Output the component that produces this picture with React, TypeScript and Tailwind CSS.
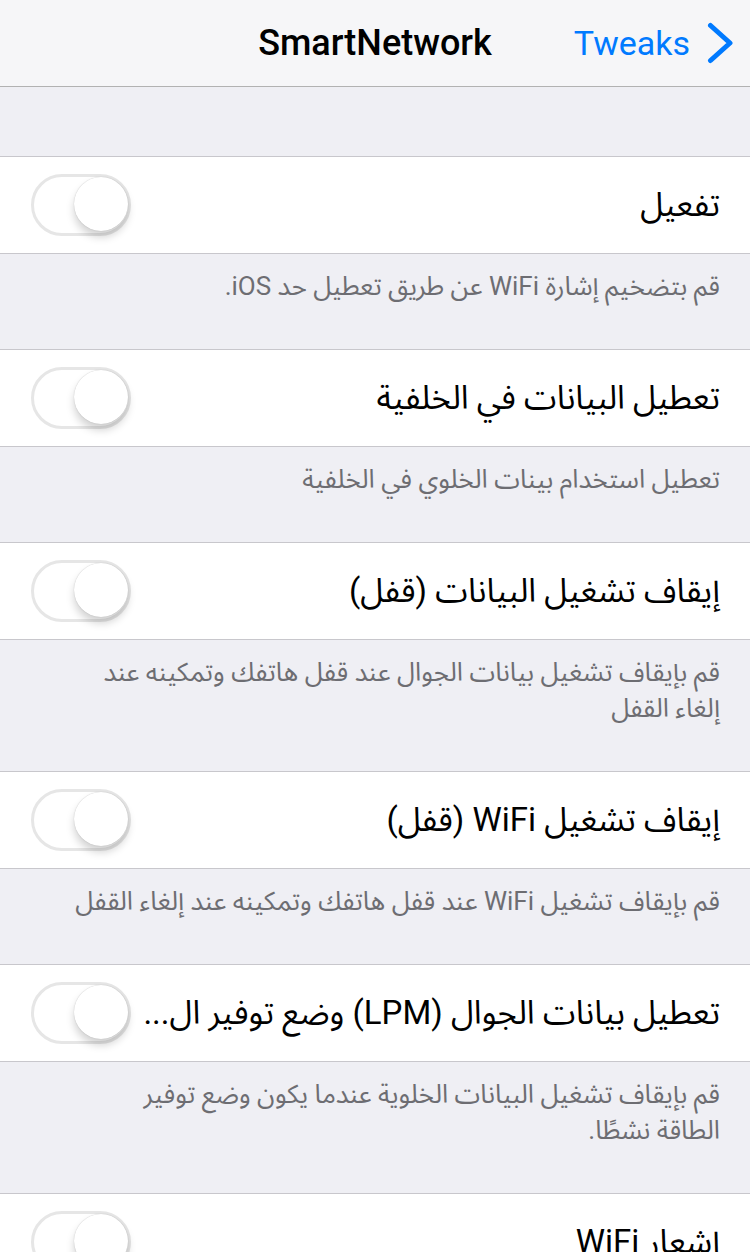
import React from "react";

const FONT = { fontFamily: "Roboto, 'Noto Sans Arabic', 'DejaVu Sans', 'Noto Sans', sans-serif" };

function Switch() {
  return (
    <div className="relative h-[62px] w-[100px] shrink-0 rounded-full border-[3px] border-[#e6e6e6] bg-white">
      <div className="absolute right-[0px] top-[0px] h-[54px] w-[54px] rounded-full bg-white shadow-[0_6px_8px_rgba(0,0,0,0.18),0_0_1px_rgba(0,0,0,0.25)]" />
    </div>
  );
}

function Cell({ label }: { label: string }) {
  return (
    <div className="flex h-[98px] items-center justify-between border-y border-[#c8c7cc] bg-white pl-[31px] pr-[30px]" dir="ltr">
      <Switch />
      <div
        dir="rtl"
        className="ml-[6px] min-w-0 flex-1 whitespace-nowrap text-right text-[33px] leading-[42px] text-black"
      >
        {label}
      </div>
    </div>
  );
}

function Footer({ lines }: { lines: string[] }) {
  return (
    <div
      dir="rtl"
      className="pl-[28px] pr-[30px] pt-[14px] pb-[45px] text-right text-[26px] leading-[36px] text-[#6d6d72]"
    >
      {lines.map((l, i) => (
        <div key={i} className="whitespace-nowrap">
          {l}
        </div>
      ))}
    </div>
  );
}

export default function App() {
  const items = [
    { label: "تفعيل", footer: ["قم بتضخيم إشارة WiFi عن طريق تعطيل حد iOS."] },
    { label: "تعطيل البيانات في الخلفية", footer: ["تعطيل استخدام بينات الخلوي في الخلفية"] },
    {
      label: "إيقاف تشغيل البيانات (قفل)",
      footer: ["قم بإيقاف تشغيل بيانات الجوال عند قفل هاتفك وتمكينه عند", "إلغاء القفل"],
    },
    { label: "إيقاف تشغيل WiFi (قفل)", footer: ["قم بإيقاف تشغيل WiFi عند قفل هاتفك وتمكينه عند إلغاء القفل"] },
    {
      label: "تعطيل بيانات الجوال (LPM) وضع توفير ال...",
      footer: ["قم بإيقاف تشغيل البيانات الخلوية عندما يكون وضع توفير", "الطاقة نشطًا."],
    },
  ];
  return (
    <div className="h-[1252px] w-[750px] overflow-hidden bg-[#efeff4]" style={FONT}>
      <div className="grid h-[87px] grid-cols-[1fr_auto_1fr] items-center border-b border-[#b2b2b2] bg-[#f6f6f8]">
        <div />
        <div className="text-[36px] font-medium text-black">SmartNetwork</div>
        <div className="flex items-center justify-end gap-[17px] pr-[16px]">
          <span className="text-[34px] text-[#007aff]">Tweaks</span>
          <svg width="27" height="42" viewBox="0 0 27 42" fill="none">
            <polyline
              points="3.5,3.5 23,21 3.5,38.5"
              stroke="#007aff"
              strokeWidth="5"
              strokeLinecap="round"
              strokeLinejoin="round"
            />
          </svg>
        </div>
      </div>
      <div className="h-[69px]" />
      {items.map((it, i) => (
        <div key={i}>
          <Cell label={it.label} />
          <Footer lines={it.footer} />
        </div>
      ))}
      <Cell label="إشعار WiFi" />
    </div>
  );
}
